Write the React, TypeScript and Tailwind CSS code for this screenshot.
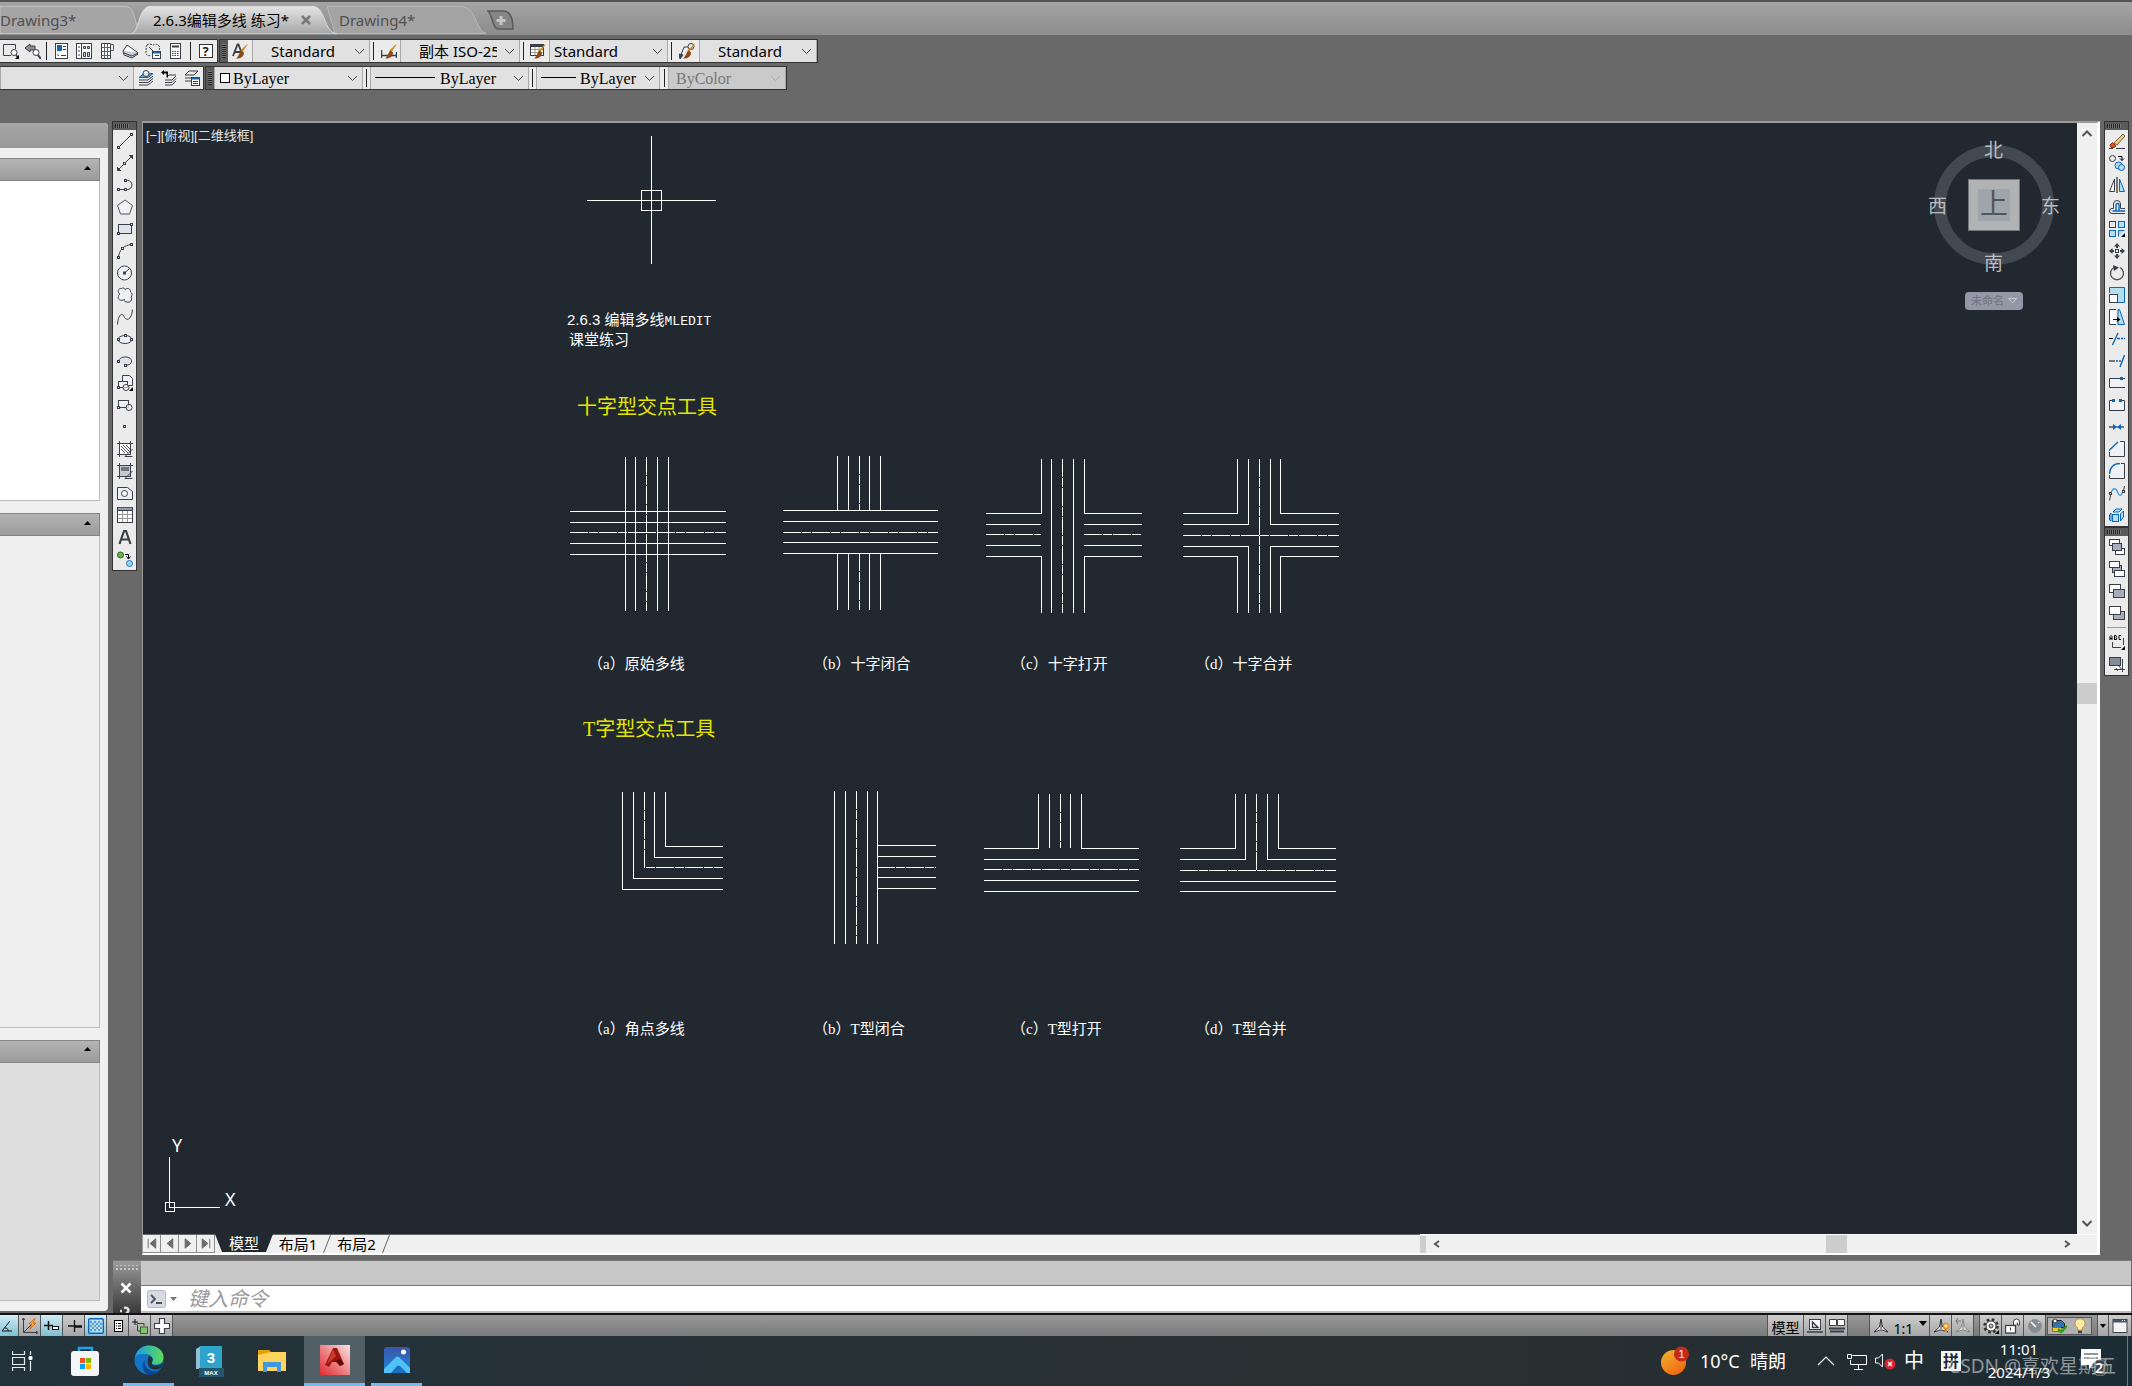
import type { ReactNode } from "react";

const INK = "#3b3f49";
const BLUE = "#0b66bd";
const SKY = "#b4def0";
const PALE = "#eef1f5";

type IconProps = { children: ReactNode; size?: number };

function Icon({ children, size = 16 }: IconProps) {
  return (
    <svg
      width={size}
      height={size}
      viewBox="0 0 16 16"
      fill="none"
      stroke={INK}
      strokeWidth="1"
      aria-hidden="true"
    >
      {children}
    </svg>
  );
}

function Dot({ x, y }: { x: number; y: number }) {
  return <rect x={x - 1} y={y - 1} width="2" height="2" fill="#ebebeb" />;
}

function Corner() {
  return <path d="M16 12v4h-4z" fill="#000" stroke="none" />;
}

type Tool = { name: string; icon: ReactNode };

const drawTools: Tool[] = [
  { name: "直线", icon: <><path d="M2 14L14 2" /><Dot x={1.5} y={14.5} /><Dot x={14.5} y={1.5} /></> },
  { name: "构造线", icon: <><path d="M2 14L14 2" /><path d="M0 16v-4l4 4zM16 0v4l-4-4z" fill={INK} /><Dot x={7.5} y={8.5} /></> },
  { name: "多段线", icon: <><path d="M1.5 12.5h9a4.5 4.5 0 0 0 0-9h-2" /><Dot x={1.5} y={12.5} /><Dot x={8.5} y={12.5} /><Dot x={8.5} y={3.5} /></> },
  { name: "多边形", icon: <path d="M8 1L15.5 6.5L12.5 15h-9L.5 6.5z" fill={PALE} stroke="#555" /> },
  { name: "矩形", icon: <><rect x="1.5" y="3.5" width="13" height="9" fill="#dfe3ec" /><Dot x={1.5} y={12.5} /><Dot x={14.5} y={3.5} /></> },
  { name: "圆弧", icon: <><path d="M1.5 14.5C2 7 7 2 14.5 1.5" /><Dot x={1.5} y={14.5} /><Dot x={5.5} y={5.5} /><Dot x={14.5} y={1.5} /></> },
  { name: "圆", icon: <><circle cx="7.5" cy="8" r="7" fill={PALE} /><path d="M7.5 8L12 4" /><Dot x={7.5} y={8} /></> },
  { name: "修订云线", icon: <path d="M3 7C0 5 1 1 4.5 1.5C6 .5 7.5 1 8 2.5C10 .5 14 1.5 13.5 5C15.5 6 15.5 9 14 10C16 13 13 16 10 15C8 15 7 14 7.5 12.5C4 14.5 0 12.5 1.5 9.5C1.5 8 2 7.5 3 7z" fill={PALE} /> },
  { name: "样条曲线", icon: <path d="M.5 15.5C1 6 5 3 7 7.5S14.5 12 15.5.5" /> },
  { name: "椭圆", icon: <><ellipse cx="8" cy="8.5" rx="7" ry="4" fill={PALE} /><Dot x={1.5} y={8.5} /><Dot x={14.5} y={8.5} /><Dot x={8.5} y={4.5} /></> },
  { name: "椭圆弧", icon: <><path d="M1.5 8.5C2 2.5 14.5 2.5 14.5 8C14.5 11 12 12 8.5 12.5" fill="#dfe3ec" /><Dot x={1.5} y={8.5} /><Dot x={8.5} y={12.5} /></> },
  { name: "插入块", icon: <><path d="M5.5 6.5v-6h7l3 3v7h-4" fill={PALE} /><rect x="1.5" y="6.5" width="9" height="6" fill={PALE} /><circle cx="9" cy="12.5" r="3" fill="#fff" fillOpacity=".6" /><Dot x={1.5} y={12.5} /><Corner /></> },
  { name: "创建块", icon: <><rect x="1.5" y="3.5" width="10" height="7" fill={PALE} /><circle cx="12" cy="10.5" r="3" fill="#fff" fillOpacity=".7" /><Dot x={1.5} y={10.5} /></> },
  { name: "点", icon: <Dot x={7.5} y={7.5} /> },
  { name: "图案填充", icon: <><rect x="2.5" y="2.5" width="11" height="11" fill="#fff" /><path d="M4 5l7 7M6 4l7 7M4 8l4 4M9 4l4 4" stroke="#555b68" /><path d="M0 2.5h16M2.5 0v16M13.5 0v9M0 13.5h8M15.5 8L8 15.5h7.5" /></> },
  { name: "渐变色", icon: <><rect x="2.5" y="2.5" width="11" height="11" fill="#c6cad0" /><rect x="4" y="4" width="8" height="4" fill="#707780" stroke="none" /><path d="M0 2.5h16M2.5 0v16M13.5 0v9M0 13.5h8M15.5 8L8 15.5h7.5" /></> },
  { name: "面域", icon: <><path d="M.5 2.5h10l5 4v8H.5z" fill={PALE} /><circle cx="7.5" cy="8.5" r="3" fill="#fff" /></> },
  { name: "表格", icon: <><rect x=".5" y=".5" width="15" height="15" fill="#fff" /><path d="M1 2h14" stroke="#8f9bb0" strokeWidth="2.5" /><path d="M1 7.5h14M1 11.5h14M5.5 4v11M10.5 4v11" stroke="#999" /><path d="M1 3.5h14" /></> },
  { name: "多行文字", icon: <path d="M2.5 15L7 2h2l4.5 13M4.5 10.5h7" strokeWidth="2.2" /> },
  { name: "添加选定对象", icon: <><circle cx="3.5" cy="4" r="3" fill="#71b04d" stroke="#2c6b1e" /><circle cx="12.5" cy="12.5" r="3" fill="#9fd2f3" stroke="#1878c4" /><path d="M8 3.5h3.5v4M9.5 5.5l2 2.5l2-2.5" stroke="#000" /></> },
];

const modifyTools: Tool[] = [
  { name: "删除", icon: <><path d="M5 10L14 1l2 2l-8 9z" fill="#e9cd83" stroke="#7b6436" /><path d="M3.5 9.5L7 13l-2 1.5H2L1 12z" fill="#d3521d" stroke="#8d3512" /><path d="M0 15.5h4M7 15.5h9" /></> },
  { name: "复制", icon: <><circle cx="3.5" cy="3.5" r="3" /><path d="M9 1.5h4v4M11 3.5l2 2l2-2" stroke="#000" /><circle cx="9.5" cy="10.5" r="3.5" fill={SKY} stroke={BLUE} /><circle cx="12.5" cy="12.5" r="3" fill={SKY} stroke={BLUE} /></> },
  { name: "镜像", icon: <><path d="M5.5 2v12.5H.5z" fill="#fff" /><path d="M10.5 2v12.5h5z" fill={SKY} stroke={BLUE} /><path d="M8 0v16" stroke="#000" /></> },
  { name: "偏移", icon: <><path d="M16 14.5H3a2.5 2.5 0 0 1 0-5h1.5V5a3.5 3.5 0 0 1 7 0v4.5H16" /><path d="M16 12H3.5M7 12V6a1.5 1.5 0 0 1 3 0v6" stroke={BLUE} strokeWidth="1.4" /></> },
  { name: "阵列", icon: <><rect x=".5" y=".5" width="6" height="6" /><g fill={SKY} stroke={BLUE}><rect x="9.5" y=".5" width="6" height="6" /><rect x=".5" y="9.5" width="6" height="6" /><path d="M9.5 15.5v-6h6" /></g><Corner /></> },
  { name: "移动", icon: <><rect x="6.5" y="6.5" width="3" height="3" /><path d="M8 0l3 3.5H9V5H7V3.5H5zM8 16l3-3.5H9V11H7v1.5H5zM0 8l3.5-3v2H5v2H3.5v2zM16 8l-3.5-3v2H11v2h1.5v2z" fill={INK} stroke="none" /></> },
  { name: "旋转", icon: <><path d="M5 2.5A6.5 6.5 0 1 0 11 2.5" strokeWidth="1.4" stroke="#555" /><path d="M4 0l6 2.5L5 6z" fill={INK} stroke="none" /></> },
  { name: "缩放", icon: <><path d="M.5 6V.5h15v15H9" fill={SKY} stroke={BLUE} /><rect x=".5" y="7.5" width="8" height="8" fill="#fff" /></> },
  { name: "拉伸", icon: <><path d="M7 .5H.5v15H7" fill="#fff" /><path d="M9 .5h1.5l5 15H9z" fill={SKY} stroke={BLUE} /><path d="M4 10.5h6" stroke="#000" /><path d="M8 8l3.5 2.5L8 13z" stroke="none" fill="#000" /></> },
  { name: "修剪", icon: <><path d="M0 7.5h4" stroke="#000" /><path d="M3.5 14L9 2M8 7.5h3M12 7.5h2M15 7.5h1" stroke={BLUE} strokeWidth="1.4" /></> },
  { name: "延伸", icon: <><path d="M0 8h6" stroke="#000" /><path d="M7 8h2M10 8h2M11 14L15.5 2" stroke={BLUE} strokeWidth="1.4" /></> },
  { name: "打断于点", icon: <><path d="M11 3.5H.5v9H16" fill={PALE} /><rect x="11" y="2" width="3" height="3" fill={BLUE} stroke="none" /><path d="M14 3.5h2" /></> },
  { name: "打断", icon: <><path d="M4 3.5H.5v10h15v-10H13" fill={PALE} /><path d="M3 2h3v3H3zM10 2h3v3h-3z" fill={BLUE} stroke="none" /></> },
  { name: "合并", icon: <><path d="M0 8h5M11 8h4" stroke="#000" /><path d="M4 5l4 3l-4 3zM12 5L8 8l4 3z" fill={BLUE} stroke="none" /><path d="M5 8h6" stroke={BLUE} /></> },
  { name: "倒角", icon: <><path d="M.5 9.5v6h15V.5H10L.5 9.5z" fill={PALE} stroke="none" /><path d="M.5 11v4.5h15V.5H11" /><path d="M0 9.5L9 1" stroke={BLUE} strokeWidth="1.4" /></> },
  { name: "圆角", icon: <><path d="M.5 15.5V11C1 4 5 .5 11 .5h4.5v15z" fill={PALE} stroke="none" /><path d="M.5 12v3.5h15V.5H12" /><path d="M.5 11C1 4 5 .5 11 .5" stroke={BLUE} strokeWidth="1.4" /></> },
  { name: "光顺曲线", icon: <><path d="M.5 15.5L2 8M15.5 1L14 8" /><path d="M2 8C4 2 7 3 8.5 7S12 12 14 6.5" stroke="#3d9be8" strokeWidth="1.3" /><Dot x={1.5} y={8.5} /><Dot x={14.5} y={6.5} /></> },
  { name: "分解", icon: <g fill={SKY} stroke={BLUE}><rect x="3.5" y="7.5" width="6" height="7" /><path d="M4 5l3-3h6l-3 3zM11.5 7l3-3v6l-3 4zM2 6L.5 8v5L2 14z" /></g> },
];

const orderTools: Tool[] = [
  { name: "前置", icon: <><rect x=".5" y=".5" width="10" height="6" fill="#fff" /><rect x="6.5" y="9.5" width="9" height="6" fill="#fff" /><rect x="3.5" y="4.5" width="9" height="7" fill="#a7aeba" /></> },
  { name: "后置", icon: <><rect x="3.5" y="4.5" width="9" height="7" fill="#a7aeba" /><rect x=".5" y=".5" width="10" height="6" fill="#fff" /><rect x="5.5" y="9.5" width="10" height="6" fill="#fff" /></> },
  { name: "置于对象之上", icon: <><rect x=".5" y="1.5" width="11" height="8" fill="#fff" /><rect x="4.5" y="6.5" width="11" height="8" fill="#a7aeba" /></> },
  { name: "置于对象之下", icon: <><rect x="4.5" y="6.5" width="11" height="8" fill="#a7aeba" /><rect x=".5" y="1.5" width="11" height="8" fill="#fff" /></> },
];

const annotationTools: Tool[] = [
  { name: "注释前置", icon: <><path d="M1 6V2.5L2 1.5l1 1V6M1 4.5h2M5.5 6V1.5H7L7.5 3L7 3.5L8 5L7 5.5H5.5M12 1.5h-2v4h2" stroke="#000" /><path d="M3.5 8v5.5H12M14.5 11V4" /><Corner /></> },
  { name: "图案填充后置", icon: <><path d="M6 8h10v7H6z" fill="#fff" stroke="none" /><path d="M5 13.5h11M13.5 3v13M7 12l2 3M10 10l3 4" /><rect x=".5" y="1.5" width="11" height="8" fill="#848c99" /></> },
];

const viewTools: Tool[] = [
  { name: "窗口缩放", icon: <><path d="M8 12.5H.5v-11h12V6" /><circle cx="11" cy="9.5" r="3" fill="#fff" /><path d="M13 12l2 2.5" strokeWidth="1.8" /><Corner /></> },
  { name: "缩放上一个", icon: <><path d="M0 5l5-4v2h5v4H5v2z" fill="#8a8f98" /><circle cx="11" cy="9.5" r="3" fill="#fff" /><path d="M13 12l3 4" strokeWidth="2" /></> },
];

const paletteTools: Tool[] = [
  { name: "特性", icon: <><rect x="2.5" y=".5" width="12" height="15" fill="#fff" /><path d="M4 2h5v6H4z" fill="#1767a8" stroke="none" /><path d="M10 3.5h3M10 6.5h3M4 11.5l2 1.5M8 12.5h5" /></> },
  { name: "设计中心", icon: <><rect x=".5" y=".5" width="15" height="15" fill="#fff" /><path d="M5.5 1v15M2 4h2M2 8h2M2 12h2" /><path d="M7.5 3.5h2v2h-2zM11.5 3.5h2v2h-2zM7.5 9.5h2v4h-2zM11.5 9.5h2v4h-2z" fill="#c9ced6" /></> },
  { name: "工具选项板", icon: <><path d="M2.5.5h9v15h-9z" fill="#fff" /><path d="M11.5 1.5h3v6h-3M5.5 1v14M8.5 1v14M3 4.5h8M3 8.5h8M3 12.5h8" stroke="#5a606c" /></> },
  { name: "图纸集管理器", icon: <><path d="M1 8l4-6l10 7l-4 3z" fill="#fff" /><path d="M1 8l1 4l8 3l6-4l-1-2M2 10l8 3l6-3" fill="#c9ced6" /></> },
  { name: "标记集管理器", icon: <><path d="M2 2c3-2 5 0 6 0s4-2 6 1s-1 4 0 6M2 2c-2 3 0 5-1 7s2 5 5 3" strokeDasharray="2 1" /><rect x="7.5" y="8.5" width="8" height="7" fill="#fff" /><path d="M8 9.5h7" stroke="#1767a8" strokeWidth="2" /><path d="M10 12.5h4M4 4l4 4" /></> },
  { name: "快速计算器", icon: <><rect x="2.5" y=".5" width="10" height="15" fill="#fff" /><path d="M4 3.5h7" strokeWidth="2" /><path d="M4 8.5h7M4 10.5h7M4 12.5h7" strokeDasharray="1.5 1" /></> },
];

const layerTools: Tool[] = [
  { name: "将对象的图层设为当前", icon: <><path d="M1 15h9l5-4M1 12.5h9l5-4M1 10h9l5-4" /><path d="M1 7.5h9l5-4H6z" fill="#5cabe2" stroke={BLUE} /><circle cx="8" cy="3.5" r="3" fill="#fff" fillOpacity=".8" /></> },
  { name: "上一个图层", icon: <><path d="M4 15h7l4-4M4 12.5h7l4-4M4 10h7l4-4M6 7l2-2h7" /><path d="M0 2.5l3-2.5v1.5h4v6H5.5V3.5H3V5z" fill="#000" stroke="none" /></> },
  { name: "图层状态管理器", icon: <><path d="M1 11h6M1 8h6M1 5h9l4-4H5z" /><rect x="7.5" y="7.5" width="8" height="8" fill="#fff" /><path d="M8 8.5h7" stroke="#1767a8" strokeWidth="2" /><path d="M9 11.5h5M9 13.5h5" /></> },
];

function Brush() {
  return (
    <g stroke="none">
      <path d="M16 1l-5.5 8l-2-1.5L14 2z" fill="#d98a1e" />
      <path d="M9.5 7.5l2.5 2c0 4-3 6-8 6c3-2 3-6 5.5-8z" fill="#8d4a17" />
    </g>
  );
}

function ToolButton({ tool, className }: { tool: Tool; className: string }) {
  return (
    <button
      type="button"
      aria-label={tool.name}
      className={`flex shrink-0 items-center justify-center ${className}`}
    >
      <Icon>{tool.icon}</Icon>
    </button>
  );
}

function ToolStrip({ label, children }: { label: string; children: ReactNode }) {
  return (
    <div
      role="toolbar"
      aria-label={label}
      className="flex w-[25px] flex-col border border-[#333] bg-[#ebebeb]"
    >
      <div className="flex h-2 items-center bg-[#5a5a5a] pl-0.5">
        <div className="h-1 w-[14px] bg-[repeating-linear-gradient(90deg,#222_0_1px,#777_1px_2px)]" />
      </div>
      {children}
    </div>
  );
}

function Grip() {
  return (
    <div className="flex w-2 shrink-0 justify-center bg-[#5a5a5a] pt-1">
      <div className="h-[14px] w-1 bg-[repeating-linear-gradient(0deg,#222_0_1px,#777_1px_2px)]" />
    </div>
  );
}

function Divider({ className }: { className: string }) {
  return (
    <div className={`flex shrink-0 justify-center py-0.5 ${className}`}>
      <div className="w-px bg-[#222]" />
    </div>
  );
}

type ComboProps = {
  label: string;
  value: string;
  className: string;
  selectClass: string;
  disabled?: boolean;
  children?: ReactNode;
};

function Combo({ label, value, className, selectClass, disabled, children }: ComboProps) {
  return (
    <div
      className={`relative shrink-0 border-x border-[#a9a9a9] ${disabled ? "bg-[#cacaca] text-[#777]" : "bg-[#e1e1e1] text-black"} ${className}`}
    >
      <select
        aria-label={label}
        disabled={disabled}
        className={`block h-full w-full appearance-none pr-[22px] ${selectClass}`}
      >
        <option>{value}</option>
      </select>
      {children}
      <svg
        className="pointer-events-none absolute top-2 right-1"
        width="11"
        height="7"
        fill="none"
        stroke={disabled ? "#aaa" : "#444"}
        aria-hidden="true"
      >
        <path d="M1 1l4.5 4.5L10 1" />
      </svg>
    </div>
  );
}

const UI = "font-['Noto_Sans','Noto_Sans_CJK_SC',sans-serif]";
const SERIF = "font-['Liberation_Serif','Noto_Sans_CJK_SC',serif]";

function FileTabs() {
  return (
    <header className="flex h-[35px] shrink-0 overflow-hidden border-t-2 border-b border-t-[#555] border-b-[#8f8f8f] bg-linear-to-b from-[#a4a4a4] to-[#8d8d8d] pt-1 text-[15px] leading-7">
      <button type="button" className="relative w-[139px] shrink-0 text-left text-[#505050]">
        <svg className="absolute inset-0" width="139" height="28" aria-hidden="true">
          <path d="M0 .5h125c9 0 8 10 14 24v3H0z" fill="#a5a5a5" stroke="#c4c4c4" />
        </svg>
        <span className="relative">Drawing3*</span>
      </button>
      <button type="button" className="relative z-10 -ml-2 flex w-[206px] shrink-0 items-center gap-3 pl-[22px] text-black">
        <svg className="absolute inset-0" width="206" height="28" aria-hidden="true">
          <defs>
            <linearGradient id="tab-face" x2="0" y2="1">
              <stop stopColor="#e4e4e4" />
              <stop offset="1" stopColor="#a6a6a6" />
            </linearGradient>
          </defs>
          <path
            d="M0 28C9 26 7 1 19 .5h163C195 1 192 26 206 28z"
            fill="url(#tab-face)"
            stroke="#dedede"
          />
        </svg>
        <span className="relative whitespace-nowrap">2.6.3编辑多线 练习*</span>
        <svg className="relative" width="10" height="10" stroke="#777" strokeWidth="2.5" aria-hidden="true">
          <path d="M1 1l8 8M9 1L1 9" />
        </svg>
      </button>
      <button type="button" className="relative -ml-2.5 w-[160px] shrink-0 pl-3 text-left text-[#505050]">
        <svg className="absolute inset-0" width="160" height="28" aria-hidden="true">
          <path d="M0 .5h134C150 1 148 24 159 27.5H8z" fill="#a3a3a3" stroke="#b9b9b9" />
        </svg>
        <span className="relative">Drawing4*</span>
      </button>
      <button type="button" aria-label="新图形" className="flex items-center">
        <svg width="28" height="20" aria-hidden="true">
          <path d="M1 1h15c8 0 10 8 10 18H12C5 19 6 6 1 1z" fill="#858585" stroke="#5a5a5a" strokeWidth="1.5" />
          <path d="M14 6v9M9.5 10.5h9" stroke="#c6c6c6" strokeWidth="3" />
        </svg>
      </button>
    </header>
  );
}

function Toolbars() {
  return (
    <div className="flex shrink-0 flex-col gap-[3px] pt-1 pb-[31px]">
      <div className="flex h-6 gap-px">
        <div className="flex w-[218px] shrink-0 border border-l-0 border-[#333] bg-[#ebebeb]">
          {viewTools.map((tool) => (
            <ToolButton key={tool.name} tool={tool} className="w-[22px]" />
          ))}
          <Divider className="w-[5px]" />
          {paletteTools.map((tool) => (
            <ToolButton key={tool.name} tool={tool} className="w-[23px]" />
          ))}
          <Divider className="w-[7px]" />
          <button type="button" aria-label="帮助" className="flex w-[23px] items-center justify-center">
            <span className="flex size-[14px] items-center justify-center border border-[#333] bg-white text-[13px] leading-none font-bold text-[#222]">
              ?
            </span>
          </button>
        </div>
        <div className="flex shrink-0 border border-[#333] bg-[#ebebeb] text-[15px]">
          <Grip />
          <ToolButton
            tool={{ name: "文字样式", icon: <><path d="M1 13L5.5 1.5h1L10 11M3 9h5.5" strokeWidth="1.8" /><Brush /></> }}
            className="w-6"
          />
          <Combo label="文字样式控制" value="Standard" className="w-[118px]" selectClass="pl-[18px]" />
          <Divider className="w-[7px]" />
          <ToolButton
            tool={{ name: "标注样式", icon: <><path d="M.5 7v8M15.5 9v6M1 12.5h14" strokeWidth="1.4" /><Brush /></> }}
            className="w-[23px]"
          />
          <Combo label="标注样式控制" value="副本 ISO-25" className="w-[120px]" selectClass="pl-[18px]" />
          <Divider className="w-[6px]" />
          <ToolButton
            tool={{ name: "表格样式", icon: <><rect x=".5" y="1.5" width="13" height="11" fill="#fff" /><path d="M1 3h12" strokeWidth="2" /><path d="M1 6.5h12M1 9.5h12M5 4v8M9 4v8" stroke="#999" /><Brush /></> }}
            className="w-[23px]"
          />
          <Combo label="表格样式控制" value="Standard" className="w-[119px]" selectClass="pl-1" />
          <Divider className="w-[6px]" />
          <ToolButton
            tool={{ name: "多重引线样式", icon: <><path d="M1.5 13L5 4h4" /><path d="M0 11l4 1l-3 4z" fill={INK} /><circle cx="12" cy="3.5" r="3" /><Brush /></> }}
            className="w-[25px]"
          />
          <Combo label="多重引线样式控制" value="Standard" className="w-[118px]" selectClass="pl-[18px]" />
        </div>
      </div>
      <div className={`flex h-6 gap-px text-base ${SERIF}`}>
        <div className="flex w-[204px] shrink-0 border border-l-0 border-[#333] bg-[#ebebeb]">
          <Combo label="图层" value="" className="w-[134px]" selectClass="pl-1" />
          {layerTools.map((tool) => (
            <ToolButton key={tool.name} tool={tool} className="w-[23px]" />
          ))}
        </div>
        <div className="flex shrink-0 border border-[#333] bg-[#ebebeb]">
          <Grip />
          <Combo label="颜色控制" value="ByLayer" className="w-[149px]" selectClass="pl-[18px]">
            <span className="pointer-events-none absolute top-[6px] left-[5px] size-[10px] border border-black bg-white" />
          </Combo>
          <Divider className="w-[7px]" />
          <Combo label="线型控制" value="ByLayer" className="w-[159px]" selectClass="pl-[69px]">
            <span className="pointer-events-none absolute top-[10px] left-1 h-px w-[60px] bg-black" />
          </Combo>
          <Divider className="w-[7px]" />
          <Combo label="线宽控制" value="ByLayer" className="w-[124px]" selectClass="pl-[43px]">
            <span className="pointer-events-none absolute top-[10px] left-1 h-px w-[35px] bg-black" />
          </Combo>
          <Divider className="w-[8px]" />
          <Combo label="打印样式控制" value="ByColor" className="w-[118px]" selectClass="pl-[7px]" disabled />
        </div>
      </div>
    </div>
  );
}

function PalettePanel({ label, grow, body }: { label: string; grow: string; body: string }) {
  return (
    <section aria-label={label} className={`flex min-h-0 flex-col ${grow}`}>
      <button
        type="button"
        aria-label={`折叠${label}`}
        className="flex h-[23px] shrink-0 items-center justify-end border border-l-0 border-[#858585] bg-linear-to-b from-[#b4b4b4] to-[#9b9b9b] pr-2 pb-1"
      >
        <svg width="7" height="4" aria-hidden="true">
          <path d="M0 4l3.500-4L7 4z" />
        </svg>
      </button>
      <div className={`flex-1 border-r border-b border-[#bdbdbd] ${body}`} />
    </section>
  );
}

function Palette() {
  return (
    <aside className="mt-0.5 mb-0.5 flex w-[108px] shrink-0 flex-col overflow-hidden rounded-r-sm bg-[#f0f0f0]">
      <div className="h-[25px] shrink-0 bg-linear-to-b from-[#a6a6a6] to-[#989898]" />
      <div className="flex flex-1 flex-col gap-3 pt-2.5 pr-2 pb-2.5">
        <PalettePanel label="常规" grow="flex-[343]" body="bg-white" />
        <PalettePanel label="三维效果" grow="flex-[514]" body="bg-[#efefef]" />
        <PalettePanel label="打印样式" grow="flex-[261]" body="bg-[#dedede]" />
      </div>
    </aside>
  );
}

const solidLines = [
  // crosshair and pick box
  "M651 136V264M587 200H716M641 190H661V210H641Z",
  // cross, original
  "M625 457V611M635 457V611M657 457V611M668 457V611M570 511H726M570 522H726M570 543H726M570 554H726",
  // cross, closed
  "M783 510H938M783 521H938M783 542H938M783 553H938",
  "M837 456V510M848 456V510M869 456V510M880 456V510M837 553V610M848 553V610M869 553V610M880 553V610",
  // cross, open
  "M986 513H1041V459M986 524H1041M986 545H1041M986 556H1041V613M1051 459V613M1073 459V613",
  "M1142 513H1084V459M1142 524H1084M1142 545H1084M1142 556H1084V613",
  // cross, merged
  "M1183 513H1237V459M1183 524H1248V459M1183 546H1248V613M1183 556H1237V613",
  "M1339 513H1280V459M1339 524H1270V459M1339 546H1270V613M1339 556H1280V613",
  // corner
  "M622 792V889H723M633 792V878H723M654 792V857H723M665 792V846H723",
  // tee, closed
  "M834 791V944M845 791V944M867 791V944M877 791V944M877 845H936M877 856H936M877 877H936M877 888H936",
  // tee, open
  "M984 848H1038V794M1049 794V848M1070 794V848M1139 848H1081V794M984 859H1139M984 880H1139M984 891H1139",
  // tee, merged
  "M1180 848H1235V794M1180 859H1245V794M1336 848H1278V794M1336 859H1267V794M1180 881H1336M1180 891H1336",
  // ucs icon
  "M169 1157V1207H220M165 1202H174V1211H165Z",
];

const centerLines = [
  "M646 457V611M570 532H726",
  "M859 456V510M859 553V610M783 532H938",
  "M1062 459V613M986 534H1041M1084 534H1142",
  "M1259 459V613M1183 535H1339",
  "M644 792V867H723",
  "M856 791V944M877 867H936",
  "M1060 794V848M984 869H1139",
  "M1256 794V870M1180 870H1336",
];

const captions = [
  { text: "（a）原始多线", at: "left-[445px] top-[531px]" },
  { text: "（b）十字闭合", at: "left-[670px] top-[531px]" },
  { text: "（c）十字打开", at: "left-[868px] top-[531px]" },
  { text: "（d）十字合并", at: "left-[1052px] top-[531px]" },
  { text: "（a）角点多线", at: "left-[445px] top-[896px]" },
  { text: "（b）T型闭合", at: "left-[670px] top-[896px]" },
  { text: "（c）T型打开", at: "left-[868px] top-[896px]" },
  { text: "（d）T型合并", at: "left-[1052px] top-[896px]" },
];

function ViewCube() {
  return (
    <div className="absolute top-[10px] right-[11px] flex w-[144px] flex-col items-center text-[#b9bcc0]">
      <div className="relative h-[144px] w-[144px] text-[19px] leading-6">
        <svg className="absolute inset-0" width="144" height="144" aria-hidden="true">
          <circle cx="72" cy="72" r="54" fill="none" stroke="#434950" strokeWidth="12" />
        </svg>
        <span className="absolute top-[6px] left-[62px]">北</span>
        <span className="absolute top-[62px] left-[6px]">西</span>
        <span className="absolute top-[62px] right-[6px]">东</span>
        <span className="absolute top-[119px] left-[62px]">南</span>
        <button
          type="button"
          className="absolute top-[46px] left-[46px] flex size-[52px] items-center justify-center border border-[#73777b] bg-[#b0b2b4]"
        >
          <span className="size-8 bg-[#9fa6ab] text-center text-[28px] leading-8 text-[#4f565c]">上</span>
        </button>
      </div>
      <button
        type="button"
        className="mt-[15px] flex h-[18px] w-[58px] items-center justify-center gap-1 rounded bg-[#9497a5] text-[11px] text-[#70747f]"
      >
        未命名
        <svg width="9" height="6" fill="none" stroke="#c6c8d2" aria-hidden="true">
          <path d="M.5 .5h8L4.5 5z" />
        </svg>
      </button>
    </div>
  );
}

function Canvas() {
  return (
    <div className={`relative min-w-0 flex-1 overflow-hidden bg-[#212830] text-white ${SERIF}`}>
      <svg className="absolute top-0 left-0 overflow-visible" width="1" height="1" aria-hidden="true">
        <g
          transform="translate(-142.6 -122.6)"
          fill="none"
          stroke="#fff"
          shapeRendering="crispEdges"
        >
          {solidLines.map((d) => (
            <path key={d} d={d} />
          ))}
          {centerLines.map((d) => (
            <path key={d} d={d} strokeDasharray="18 1 9 1" />
          ))}
        </g>
      </svg>
      <div className="absolute top-[3px] left-[3px] font-['Liberation_Sans','Noto_Sans_CJK_SC',sans-serif] text-[13px] leading-5 text-[#e6e6e6]">
        [−][俯视][二维线框]
      </div>
      <div className="absolute top-[187px] left-[424px] text-[15px] leading-5 whitespace-nowrap">
        <p className="h-5">
          <span className="font-['Liberation_Sans',sans-serif]">2.6.3 </span>
          编辑多线
          <span className="font-['Liberation_Mono',monospace] text-[13px]">MLEDIT</span>
        </p>
        <p className="pl-0.5">课堂练习</p>
      </div>
      <h2 className="absolute top-[272px] left-[434px] text-[20px] leading-6 whitespace-nowrap text-[#e6e600]">
        十字型交点工具
      </h2>
      <h2 className="absolute top-[594px] left-[440px] text-[20px] leading-6 whitespace-nowrap text-[#e6e600]">
        T字型交点工具
      </h2>
      {captions.map((c) => (
        <p key={c.text} className={`absolute text-[15px] leading-5 whitespace-nowrap ${c.at}`}>
          {c.text}
        </p>
      ))}
      <span className={`absolute top-[1010px] left-[29px] text-lg leading-6 ${UI}`}>Y</span>
      <span className={`absolute top-[1064px] left-[82px] text-lg leading-6 ${UI}`}>X</span>
      <ViewCube />
    </div>
  );
}

const sheetNav = [
  { name: "第一个", d: "M5 4v10M13 4v10L7 9z" },
  { name: "上一个", d: "M12 4v10L6 9z" },
  { name: "下一个", d: "M6 4v10l6-5z" },
  { name: "最后一个", d: "M13 4v10M5 4v10l6-5z" },
];

function SheetTabs() {
  return (
    <div className="flex h-[19px] shrink-0 bg-[#f0f0f0] text-[15px] leading-[17px] text-black">
      <div className="flex flex-1 border-t border-[#696969]">
        {sheetNav.map((nav) => (
          <button key={nav.name} type="button" aria-label={nav.name} className="w-[18px] border-r border-b border-[#8c8c8c]">
            <svg width="17" height="17" viewBox="0 0 17 18" fill="#6b6b6b" stroke="#6b6b6b" aria-hidden="true">
              <path d={nav.d} />
            </svg>
          </button>
        ))}
        <button type="button" className="relative -mt-px w-[58px] text-white">
          <svg className="absolute inset-0" width="60" height="19" aria-hidden="true">
            <path d="M0 0h58l-7 18H7z" fill="#212830" />
          </svg>
          <span className="relative">模型</span>
        </button>
        <button type="button" className="relative w-[58px] pr-2">
          布局1
          <svg className="absolute top-0 right-0" width="9" height="18" stroke="#666" aria-hidden="true">
            <path d="M8.5 0l-7 18" />
          </svg>
        </button>
        <button type="button" className="relative w-[59px] pr-2">
          布局2
          <svg className="absolute top-0 right-0" width="9" height="18" stroke="#666" aria-hidden="true">
            <path d="M8.5 0l-7 18" />
          </svg>
        </button>
      </div>
      <div className="flex w-[677px] shrink-0 items-center border-t border-white">
        <div className="h-[17px] w-[6px] bg-[#cdcdcd]" />
        <button type="button" aria-label="向左滚动" className="flex w-[22px] justify-center">
          <svg width="8" height="8" fill="none" stroke="#555" strokeWidth="2" aria-hidden="true">
            <path d="M6 1L2 4l4 3" />
          </svg>
        </button>
        <div className="flex h-full flex-1 pl-[378px]">
          <div className="w-[21px] bg-[#cdcdcd]" />
        </div>
        <button type="button" aria-label="向右滚动" className="mr-[25px] flex w-[10px] justify-center">
          <svg width="8" height="8" fill="none" stroke="#555" strokeWidth="2" aria-hidden="true">
            <path d="M2 1l4 3l-4 3" />
          </svg>
        </button>
      </div>
    </div>
  );
}

function DrawingWindow() {
  return (
    <main className="flex min-w-0 flex-1 flex-col border border-t-2 border-r-[3px] border-b-2 border-[#9a9a9a] border-r-white border-b-white">
      <div className="flex min-h-0 flex-1">
        <Canvas />
        <div className="flex w-5 shrink-0 flex-col items-center justify-between bg-[#f0f0f0] py-1.5">
          <svg width="12" height="8" fill="none" stroke="#555" strokeWidth="2" aria-hidden="true">
            <path d="M1.5 7L6 2.5L10.5 7" />
          </svg>
          <div className="mt-[30px] h-[21px] w-5 bg-[#cdcdcd]" />
          <svg width="12" height="8" fill="none" stroke="#555" strokeWidth="2" aria-hidden="true">
            <path d="M1.5 1L6 5.5L10.5 1" />
          </svg>
        </div>
      </div>
      <SheetTabs />
    </main>
  );
}

function CommandLine() {
  return (
    <div className="mr-px ml-[5px] flex h-[53px] shrink-0 border-t border-[#7a7a7a]">
      <div className="flex w-7 shrink-0 flex-col items-center overflow-hidden bg-linear-to-b from-[#9b9b9b] to-[#3a3a3a] pt-1">
        <div className="h-[2px] w-[22px] bg-[repeating-linear-gradient(90deg,#c4c4c4_0_2px,transparent_2px_4px)]" />
        <div className="mt-0.5 h-[2px] w-[22px] bg-[repeating-linear-gradient(90deg,#c4c4c4_0_2px,transparent_2px_4px)]" />
        <button type="button" aria-label="关闭" className="mt-3 mr-0.5">
          <svg width="12" height="12" stroke="#fff" strokeWidth="2.5" aria-hidden="true">
            <path d="M1.5 1.5l9 9M10.500 1.5l-9 9" />
          </svg>
        </button>
        <svg className="mt-3 mr-1" width="12" height="12" fill="none" stroke="#ddd" strokeWidth="2.5" aria-hidden="true">
          <path d="M1 5h2M5 2c4-1 6 2 3 5l4 4" />
        </svg>
      </div>
      <div className="flex min-w-0 flex-1 flex-col border-b-2 border-[#bdbdbd]">
        <div className="h-[25px] border-b border-[#777] bg-[#c8c8c8]" />
        <div className="flex flex-1 items-center bg-white pl-1.5">
          <svg width="19" height="18" aria-hidden="true">
            <rect x=".5" y=".5" width="18" height="17" rx="2" fill="#d6dae1" stroke="#b5bac2" />
            <path d="M4 5l4 4l-4 4M9 13h6" fill="none" stroke="#4c5260" strokeWidth="1.8" />
          </svg>
          <svg className="ml-1 shrink-0" width="7" height="4" fill="#777" aria-hidden="true">
            <path d="M0 0h7L3.5 4z" />
          </svg>
          <input
            aria-label="命令"
            placeholder="键入命令"
            className="h-6 min-w-0 flex-1 bg-transparent pl-[11px] text-[20px] italic outline-none placeholder:text-[#9a9a9a]"
          />
        </div>
      </div>
    </div>
  );
}

const statusToggles = [
  { name: "动态 UCS", on: true, width: "w-[19px]", icon: <path d="M9 3L1 13h10M4 10c3 0 3 2 3 3" stroke="#111" /> },
  { name: "三维对象捕捉", on: false, width: "w-[22px]", icon: <><path d="M1.5 0v14.5H16M0 2l1.5-2L3 2M14 13l2 1.5l-2 1.5M2 14l7-7" /><path d="M13 0L7 6h3L8 11l6-6h-3z" fill="#ffb02a" stroke="#c9610a" strokeWidth=".8" /></> },
  { name: "动态输入", on: true, width: "w-[22px]", icon: <><path d="M0 7.5h9M4.5 3v9" stroke="#111" strokeWidth="1.5" /><rect x="8.5" y="8.5" width="6" height="3" fill="#fff" stroke="#111" /></> },
  { name: "线宽", on: false, width: "w-[22px]", icon: <><path d="M2 8h6M8.5 2v12" stroke="#111" strokeWidth="1.3" /><path d="M8 8.5h8" stroke="#111" strokeWidth="2.5" /></> },
  { name: "透明度", on: true, width: "w-[22px]", icon: <><rect x=".7" y=".7" width="14.6" height="14.6" rx="1" fill="#b9dcf2" stroke={BLUE} strokeWidth="1.4" /><path d="M2 4h12M2 8h12M2 12h12" stroke="#5e9fce" strokeWidth="2" strokeDasharray="2 2" /><path d="M4 6h10M4 10h10" stroke="#5e9fce" strokeWidth="2" strokeDasharray="2 2" /></> },
  { name: "快捷特性", on: false, width: "w-[22px]", icon: <><rect x="4.5" y="2.5" width="8" height="11" fill="#fff" stroke="#000" /><path d="M6 5.5h1M8 5.5h3M6 8h1M8 8h3M6 10.5h1M8 10.5h3" stroke="#000" /></> },
  { name: "选择循环", on: false, width: "w-[22px]", icon: <><path d="M0 4h6M3 1v6" stroke="#111" /><path d="M5 7V5.5h7V8" /><rect x="8.5" y="9" width="7" height="6.5" fill="#86c56b" stroke="#2c6b1e" /><path d="M5.5 7v6H8" /></> },
  { name: "注释监视器", on: false, width: "w-[22px]", icon: <path d="M5.5.5h5v5h5v5h-5v5h-5v-5h-5v-5h5z" fill="#fff" strokeWidth="1.2" /> },
];

const FACE = "flex shrink-0 items-center justify-center border-r border-[#555]";
const IDLE = "bg-linear-to-b from-[#cdcdcd] to-[#a5a5a5]";
const LIT = "bg-linear-to-b from-[#d2ecf4] to-[#7fbfd2]";

function AnnotationScale({ color }: { color: string }) {
  return <path d="M8 1L6.5 9L1 14l6-2h2l6 2l-5.5-5zM8 2v9" fill="#fff" stroke={color} />;
}

function StatusBar() {
  return (
    <div className="flex h-[23px] shrink-0 border-t-2 border-[#111] bg-linear-to-b from-[#999] to-[#7a7a7a] text-[14px] leading-5 text-black">
      {statusToggles.map((t) => (
        <button
          key={t.name}
          type="button"
          aria-label={t.name}
          aria-pressed={t.on}
          className={`${FACE} ${t.width} ${t.on ? LIT : IDLE}`}
        >
          <Icon>{t.icon}</Icon>
        </button>
      ))}
      <div className="flex-1 border-r border-[#555]" />
      <button type="button" className={`${FACE} w-9 ${IDLE} pt-1`}>模型</button>
      <button type="button" aria-label="快速查看布局" className={`${FACE} w-[22px] ${IDLE}`}>
        <Icon><rect x="2.5" y="1.5" width="11" height="10" fill="#fff" /><path d="M5.5 4v5.5H11zM0 14h16" strokeWidth="1.5" /></Icon>
      </button>
      <button type="button" aria-label="快速查看图形" className={`${FACE} w-[22px] ${IDLE}`}>
        <Icon><path d="M.5 1.5h7v6h-7zM8.5 1.5h7v6h-7z" fill="#fff" /><path d="M0 10.5h16M1 13.5h14" strokeWidth="2" /></Icon>
      </button>
      <div className="w-[22px] shrink-0 border-r border-[#555]" />
      <button type="button" className={`${FACE} w-[60px] gap-0.5 ${IDLE}`}>
        <Icon><AnnotationScale color="#333" /></Icon>
        <span className="w-[26px] pt-1.5">1:1</span>
        <svg className="mb-1" width="8" height="5" aria-hidden="true"><path d="M0 0h8L4 5z" /></svg>
      </button>
      <button type="button" aria-label="注释可见性" className={`${FACE} w-[22px] ${IDLE}`}>
        <Icon><AnnotationScale color="#333" /><circle cx="13" cy="8" r="2.5" fill="#ffe8a0" stroke="#f08c1a" strokeWidth="1.5" /><path d="M12 12h2v2h-2z" fill="#f08c1a" stroke="none" /></Icon>
      </button>
      <button type="button" aria-label="自动缩放" className={`${FACE} w-[22px] ${IDLE}`}>
        <Icon><g opacity=".6"><AnnotationScale color="#666" /><path d="M1 3h5M3 0L1 3l2 3" /></g></Icon>
      </button>
      <div className="w-[6px] shrink-0 border-r border-[#555]" />
      <button type="button" aria-label="切换工作空间" className={`${FACE} w-[22px] ${IDLE}`}>
        <Icon><circle cx="8" cy="8" r="6.5" stroke="#333" strokeWidth="2.5" strokeDasharray="2.6 2.5" /><circle cx="8" cy="8" r="5" fill="#fff" stroke="#333" /><circle cx="8" cy="8" r="2" fill="#bbb" /><Corner /></Icon>
      </button>
      <button type="button" aria-label="锁定" className={`${FACE} w-[22px] ${IDLE}`}>
        <Icon><rect x=".5" y="7.5" width="10" height="7.5" fill="#fff" strokeWidth="1.3" /><path d="M5.5 9.5v3M8.5 7V4a3 3 0 0 1 6 0v3h-2V4.5" fill="#fff" /></Icon>
      </button>
      <button type="button" aria-label="硬件加速" className={`${FACE} w-[22px] ${IDLE}`}>
        <Icon><circle cx="8" cy="8" r="6.5" fill="#858b92" stroke="#8f949a" /><path d="M4 4l5 5M11 4l1 1" stroke="#fff" strokeWidth="1.5" /></Icon>
      </button>
      <div className="flex w-[52px] shrink-0 items-center border-r border-[#555] pl-px">
        <div className="flex h-[18px] w-[45px] items-center justify-around border border-[#555] bg-[#b0b0b0]">
          <Icon><path d="M1.5 2.500h9l3 3v4h-12z" fill="#2e74b5" stroke="#222" /><circle cx="4" cy="3" r="2" fill="#fff" /><path d="M1.5 9.5h8l3 4h-11z" fill="#f2cb2e" stroke="#8f7512" /><path d="M7 11l3 3l6-6" stroke="#2fa01c" strokeWidth="2.5" /></Icon>
          <Icon><path d="M8 1a4.500 4.500 0 0 1 2.500 8.500V12h-5V9.500A4.500 4.500 0 0 1 8 1z" fill="#ffe9a6" stroke="#c39a3b" /><path d="M6 14h4" strokeWidth="2.5" /></Icon>
        </div>
      </div>
      <button type="button" aria-label="状态栏菜单" className={`${FACE} w-[11px] ${IDLE}`}>
        <svg width="6" height="4" aria-hidden="true"><path d="M0 0h6L3 4z" /></svg>
      </button>
      <button type="button" aria-label="全屏显示" className={`${FACE} w-[23px] ${IDLE}`}>
        <Icon><rect x="1" y="1.5" width="14" height="13" fill="#f4f4f4" /><path d="M1 3h14" strokeWidth="3" stroke="#4b5568" /><path d="M10 2.5h1M12 2.5h1" stroke="#fff" /></Icon>
      </button>
    </div>
  );
}

function TaskbarApps() {
  return (
    <nav aria-label="任务栏" className="flex">
      <button type="button" aria-label="任务视图" className="flex w-[54px] items-center pl-3">
        <svg width="21" height="20" fill="none" stroke="#e8ecee" aria-hidden="true">
          <path d="M.5 0v3.5h12V0M.5 20v-3.5h12V20M.5 6.5h12v7H.5zM18.5 0v4M18.5 10v10" strokeWidth="1.2" />
          <path d="M17 5.5h3v3h-3z" fill="#fff" />
        </svg>
      </button>
      <button type="button" aria-label="Microsoft Store" className="flex w-[62px] items-center justify-center">
        <svg width="30" height="30" aria-hidden="true">
          <path d="M9 7V2h13v5" fill="none" stroke="#1ba4e8" strokeWidth="2.5" />
          <rect x="1" y="5" width="28" height="25" rx="3" fill="#f4f5f6" />
          <path d="M10 12h5v5h-5z" fill="#f25022" />
          <path d="M16 12h5v5h-5z" fill="#7fba00" />
          <path d="M10 18h5v5h-5z" fill="#00a4ef" />
          <path d="M16 18h5v5h-5z" fill="#ffb900" />
        </svg>
      </button>
      <button type="button" aria-label="Microsoft Edge" className="ml-[7px] flex w-[51px] items-center justify-center border-b-3 border-[#76b9ed]">
        <svg width="30" height="30" viewBox="0 0 30 30" aria-hidden="true">
          <defs>
            <linearGradient id="edge-top"><stop stopColor="#1a9be0" /><stop offset="1" stopColor="#5fdc5a" /></linearGradient>
          </defs>
          <circle cx="15" cy="15" r="14.5" fill="#1274c9" />
          <path d="M1 12C3 4 9 .5 15 .5c9 0 15 6 14.5 12c0 5-4 7-8 7c-3 0-5-1-3-3c1-2 0-6-4-7C9 8 4 9 1 12z" fill="url(#edge-top)" />
          <path d="M11 15c-2 7 4 12 12 11c2-.5 3-1 4-2c-3 5-8 6-12 5.5C8 28 7 18 11 15z" fill="#0c468f" />
          <path d="M14.5 11c4 0 5 4 3.500 6c-1 2 1 3.500 4 3.500c3.500 0 6-2 7-3c0 4-3 7-6 7c-8 1-11-5-8.500-13.500z" fill="#22323b" />
        </svg>
      </button>
      <button type="button" aria-label="3ds Max" className="ml-[9px] flex w-[54px] items-center justify-center">
        <svg className="overflow-visible" width="28" height="31" aria-hidden="true">
          <path d="M0 3l5-3v23H0z" fill="#8dc3d4" />
          <path d="M4 0h22v23H4z" fill="#2ea3cb" />
          <path d="M3 22h25v9H3z" fill="#24566b" />
          <text x="15" y="17" textAnchor="middle" fill="#fff" fontSize="15" fontWeight="700" fontFamily="Liberation Sans">3</text>
          <text x="15" y="29" textAnchor="middle" fill="#fff" fontSize="6" fontWeight="700" fontFamily="Liberation Sans">MAX</text>
        </svg>
      </button>
      <button type="button" aria-label="文件资源管理器" className="ml-[8px] flex w-[54px] items-center justify-center">
        <svg width="28" height="24" aria-hidden="true">
          <path d="M0 1h11l3 3v4H0z" fill="#e3a008" />
          <path d="M0 6l13-3h15v19H0z" fill="#ffd45e" />
          <path d="M5 23V13h18v10h-4v-5H9v5z" fill="#3f98e0" />
        </svg>
      </button>
      <button type="button" aria-label="AutoCAD" className="ml-[5px] flex w-[61px] items-center justify-center border-b-3 border-[#76b9ed] bg-[#525f67]">
        <svg width="30" height="30" aria-hidden="true">
          <defs>
            <linearGradient id="acad" y1="1" x2="1" y2="0"><stop stopColor="#e02b2f" /><stop offset="1" stopColor="#fbe1e1" /></linearGradient>
          </defs>
          <path d="M0 0h30v30H0z" fill="url(#acad)" />
          <path d="M13 3h4l7 16l-4 2l-4-4h-4l-3 5l-4-2z" fill="#9c1713" />
          <path d="M13 4l3 7l-5 5l-4 3z" fill="#c93a2a" />
          <path d="M12 17h5l3 4l4-2l-4-5z" fill="#5f0b0a" />
        </svg>
      </button>
      <button type="button" aria-label="照片" className="ml-[6px] flex w-[51px] items-center justify-center border-b-3 border-[#76b9ed]">
        <svg width="26" height="26" aria-hidden="true">
          <defs>
            <linearGradient id="photo" x2="0" y2="1"><stop stopColor="#3a55a8" /><stop offset="1" stopColor="#1f86d8" /></linearGradient>
          </defs>
          <rect width="26" height="26" rx="3" fill="url(#photo)" />
          <path d="M0 22L12 10q1.5-1 3 0l11 11v5H0z" fill="#4fc3f7" />
          <path d="M7 26l6-7q1.500-1 3 0l7 7z" fill="#1b6fc4" />
          <circle cx="19.5" cy="5" r="2.5" fill="#fff" />
        </svg>
      </button>
    </nav>
  );
}

function SystemTray() {
  return (
    <div className="flex items-center text-white">
      <button type="button" className="flex items-center text-lg">
        <svg width="28" height="30" aria-hidden="true">
          <defs>
            <linearGradient id="sun" x2=".6" y2="1"><stop stopColor="#f2b632" /><stop offset="1" stopColor="#f06a12" /></linearGradient>
          </defs>
          <circle cx="12.5" cy="16.5" r="12.5" fill="url(#sun)" />
          <circle cx="20.5" cy="8" r="7.5" fill="#c42b1c" />
          <text x="20.5" y="12" textAnchor="middle" fill="#fff" fontSize="11" fontFamily="Liberation Sans">1</text>
        </svg>
        <span className="ml-[11px] w-[50px] text-left">10°C</span>
        <span>晴朗</span>
      </button>
      <button type="button" aria-label="显示隐藏的图标" className="ml-[31px]">
        <svg width="18" height="10" fill="none" stroke="#fff" strokeWidth="1.2" aria-hidden="true"><path d="M1 9l8-8l8 8" /></svg>
      </button>
      <button type="button" aria-label="网络" className="ml-3">
        <svg width="20" height="17" fill="none" stroke="#fff" aria-hidden="true">
          <path d="M5.5 2.5h14v9H3.5V7M11.5 12v4M7 16.5h9" />
          <path d="M.5 1.5h4v4h-4z" />
        </svg>
      </button>
      <button type="button" aria-label="音量" className="ml-2">
        <svg width="21" height="18" aria-hidden="true">
          <path d="M.5 6h3l4-4v13l-4-4h-3z" fill="none" stroke="#fff" />
          <circle cx="15" cy="12" r="5.5" fill="#d9252f" />
          <path d="M13 10l4 4M17 10l-4 4" stroke="#fff" strokeWidth="1.3" />
        </svg>
      </button>
      <button type="button" className="ml-2 w-5 text-[20px] leading-6">中</button>
      <button type="button" className="ml-[17px] size-5 bg-[#f4f4f4] text-base leading-5 font-bold text-[#1c2b34]">拼</button>
      <time className="ml-4 w-[84px] text-center text-[15px] leading-[23px]">
        11:01
        <br />
        2024/1/3
      </time>
      <button type="button" aria-label="通知" className="relative ml-[19px] h-[30px] w-[30px]">
        <svg width="30" height="30" aria-hidden="true">
          <path d="M1 3h20v16h-8l-4 4v-4H1z" fill="#fff" />
          <path d="M4 8h14M4 12h14" stroke="#21303a" />
          <circle cx="20" cy="22" r="8" fill="#3c464c" stroke="#777" />
        </svg>
        <span className="absolute top-3 left-[15px] text-sm leading-5 font-semibold">2</span>
      </button>
      <div className="ml-[17px] h-[50px] w-[5px] border-l border-[#6f7a80]" />
    </div>
  );
}

export default function App() {
  return (
    <div className={`flex min-h-screen flex-col overflow-hidden bg-[#696969] ${UI}`}>
      <FileTabs />
      <Toolbars />
      <div className="flex min-h-0 flex-1">
        <Palette />
        <div className="flex min-w-0 flex-1 flex-col gap-[5px]">
          <div className="flex min-h-0 flex-1 gap-1 pr-[3px] pl-1">
            <div className="mr-px">
              <ToolStrip label="绘图">
                {drawTools.map((tool) => (
                  <ToolButton key={tool.name} tool={tool} className="h-[22px]" />
                ))}
              </ToolStrip>
            </div>
            <DrawingWindow />
            <div className="flex flex-col">
              <ToolStrip label="修改">
                {modifyTools.map((tool) => (
                  <ToolButton key={tool.name} tool={tool} className="h-[22px]" />
                ))}
              </ToolStrip>
              <ToolStrip label="绘图次序">
                {orderTools.map((tool) => (
                  <ToolButton key={tool.name} tool={tool} className="h-[22px]" />
                ))}
                <div className="mx-0.5 my-[3px] h-px bg-[#9a9a9a]" />
                {annotationTools.map((tool) => (
                  <ToolButton key={tool.name} tool={tool} className="h-[22px]" />
                ))}
              </ToolStrip>
            </div>
          </div>
          <CommandLine />
        </div>
      </div>
      <StatusBar />
      <footer className="relative flex h-[50px] shrink-0 justify-between bg-linear-to-r from-[#22323b] via-[#2a2f30] via-70% to-[#1c2c35]">
        <TaskbarApps />
        <SystemTray />
        <span className="pointer-events-none absolute right-4 bottom-1.5 text-[19px] leading-7 text-white/50">
          CSDN @喜欢星期五
        </span>
      </footer>
    </div>
  );
}
